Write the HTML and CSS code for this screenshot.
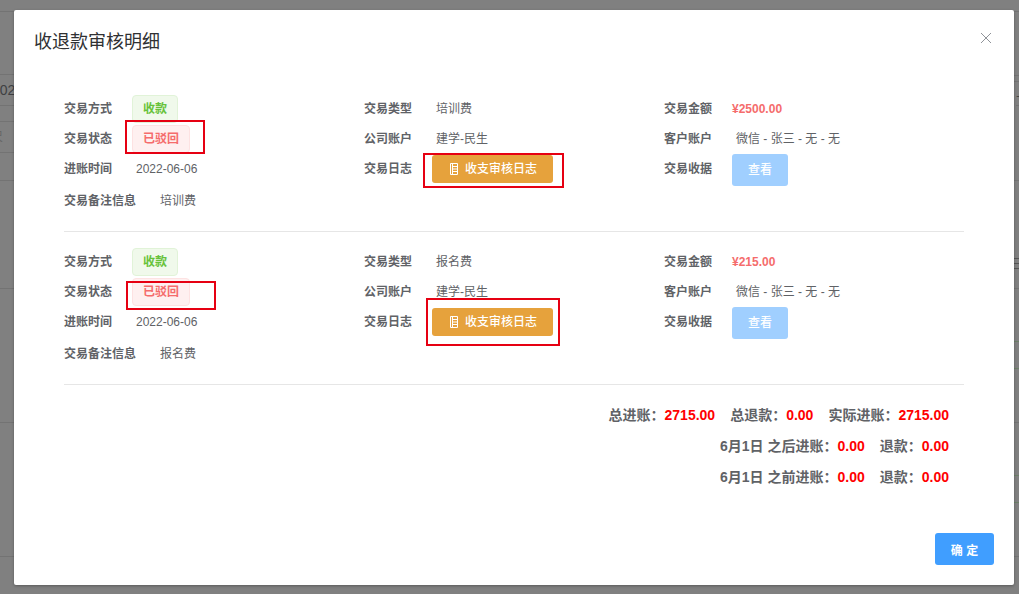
FILE: index.html
```html
<!DOCTYPE html>
<html lang="zh-CN">
<head>
<meta charset="utf-8">
<title>收退款审核明细</title>
<link rel="stylesheet" href="styles.css">
</head>
<body>
<div class="backdrop">
  <div class="strip strip-left">
    <div class="line"></div><div class="line"></div>
    <div class="line cell-date">2022-06-06</div>
    <div class="line"></div>
    <div class="line cell-note">尺</div>
    <div class="line"></div><div class="line"></div><div class="line"></div><div class="line"></div>
  </div>
  <div class="strip strip-right">
    <div class="line"></div><div class="line"></div><div class="line"></div>
    <div class="line cell-plus">+</div>
    <div class="line"></div>
    <div class="line dark"></div><div class="line dark"></div><div class="line dark"></div>
    <div class="line"></div>
    <div class="line green"></div><div class="line green"></div>
    <div class="line"></div>
    <div class="line green"></div><div class="line green"></div>
    <div class="line"></div>
  </div>
</div>

<div class="modal">
  <header class="modal-header">
    <h2 class="modal-title">收退款审核明细</h2>
    <svg class="close" width="12" height="12" viewBox="0 0 12 12"><path d="M1 1l10 10M11 1L1 11" fill="none" stroke="#909399" stroke-width="1"/></svg>
  </header>

  <div class="modal-body">
    <section class="record">
      <div class="grid">
        <div class="field"><span class="label">交易方式</span><span class="tag tag-green">收款</span></div>
        <div class="field"><span class="label">交易类型</span><span class="value">培训费</span></div>
        <div class="field"><span class="label">交易金额</span><span class="amount">¥2500.00</span></div>
        <div class="field"><span class="label">交易状态</span><span class="tag tag-red">已驳回</span></div>
        <div class="field"><span class="label">公司账户</span><span class="value">建学-民生</span></div>
        <div class="field"><span class="label">客户账户</span><span class="value">微信 - 张三 - 无 - 无</span></div>
        <div class="field"><span class="label">进账时间</span><span class="value">2022-06-06</span></div>
        <div class="field"><span class="label">交易日志</span><span class="btn btn-log"><svg class="book" width="10" height="12" viewBox="0 0 10 12"><path d="M1.500.5h7v11h-7zM3.500.5v11M4 3.500h4M4 6h4M4 8.500h4" fill="none" stroke="#fff" stroke-width="1"/></svg>收支审核日志</span></div>
        <div class="field"><span class="label">交易收据</span><span class="btn btn-view">查看</span></div>
      </div>
      <div class="remark"><span class="remark-label">交易备注信息</span><span class="remark-value">培训费</span></div>
    </section>

    <section class="record">
      <div class="grid">
        <div class="field"><span class="label">交易方式</span><span class="tag tag-green">收款</span></div>
        <div class="field"><span class="label">交易类型</span><span class="value">报名费</span></div>
        <div class="field"><span class="label">交易金额</span><span class="amount">¥215.00</span></div>
        <div class="field"><span class="label">交易状态</span><span class="tag tag-red">已驳回</span></div>
        <div class="field"><span class="label">公司账户</span><span class="value">建学-民生</span></div>
        <div class="field"><span class="label">客户账户</span><span class="value">微信 - 张三 - 无 - 无</span></div>
        <div class="field"><span class="label">进账时间</span><span class="value">2022-06-06</span></div>
        <div class="field"><span class="label">交易日志</span><span class="btn btn-log"><svg class="book" width="10" height="12" viewBox="0 0 10 12"><path d="M1.500.5h7v11h-7zM3.500.5v11M4 3.500h4M4 6h4M4 8.500h4" fill="none" stroke="#fff" stroke-width="1"/></svg>收支审核日志</span></div>
        <div class="field"><span class="label">交易收据</span><span class="btn btn-view">查看</span></div>
      </div>
      <div class="remark"><span class="remark-label">交易备注信息</span><span class="remark-value">报名费</span></div>
    </section>

    <div class="totals">
      <p class="total-line"><span class="item">总进账：<b>2715.00</b></span><span class="item">总退款：<b>0.00</b></span><span class="item">实际进账：<b>2715.00</b></span></p>
      <p class="total-line"><span class="item">6月1日 之后进账：<b>0.00</b></span><span class="item">退款：<b>0.00</b></span></p>
      <p class="total-line"><span class="item">6月1日 之前进账：<b>0.00</b></span><span class="item">退款：<b>0.00</b></span></p>
    </div>
  </div>

  <footer class="modal-footer"><span class="btn btn-ok">确 定</span></footer>

  <div class="mark mark-1"></div>
  <div class="mark mark-2"></div>
  <div class="mark mark-3"></div>
  <div class="mark mark-4"></div>
</div>
</body>
</html>
```
FILE: styles.css
```css
* { box-sizing: border-box; }
html, body { margin: 0; height: 100%; }
body {
  position: relative;
  overflow: hidden;
  background: #808080;
  font-family: "Liberation Sans", "Noto Sans CJK SC", sans-serif;
  font-size: 12px;
  color: #606266;
}

/* dimmed page behind the dialog */
.backdrop { display: flex; justify-content: space-between; height: 594px; }
.strip { display: grid; overflow: hidden; }
.strip-left {
  width: 14px;
  grid-template-rows: 12px 63px 31px 16px 31px 28px 108px 134px 134px;
}
.strip-right {
  width: 5px;
  grid-template-rows: 12px 64px 6px 24px 75px 78px 5px 5px 20px 53px 27px 54px 53px 27px 54px;
}
.line { border-bottom: 1px solid #737373; white-space: nowrap; }
.line.dark { border-bottom-color: #555; }
.line.green { border-bottom-color: #6c7f68; }
.cell-date { margin-left: -8px; font-size: 14px; line-height: 30px; color: #3f4043; }
.cell-note { margin-left: -9px; line-height: 30px; color: #666; }
.cell-plus { margin-left: 2px; font-size: 14px; line-height: 28px; color: #444; }

/* dialog */
.modal {
  position: absolute;
  left: 14px;
  top: 10px;
  width: 1000px;
  height: 575px;
  display: flex;
  flex-direction: column;
  background: #fff;
  border-radius: 2px;
  box-shadow: 0 1px 3px rgba(0, 0, 0, .3);
}
.modal-header {
  display: flex;
  justify-content: space-between;
  height: 84px;
  padding: 17px 22px 0 20px;
}
.modal-title {
  margin: 0;
  font-size: 18px;
  font-weight: 400;
  line-height: 28px;
  padding-top: 1px;
  color: #303133;
}
.close { margin-top: 5px; }

.modal-body { flex: 1; padding: 0 50px; }
.record { padding-bottom: 15px; margin-bottom: 15px; border-bottom: 1px solid #e6e6e6; }
.grid {
  display: grid;
  grid-template-columns: repeat(3, 300px);
  grid-template-rows: 30px 30px 32px;
}
.field { display: flex; align-items: flex-start; line-height: 30px; }
.label { width: 68px; flex: none; font-weight: 700; }
.value { margin-left: 4px; }
.amount { font-weight: 700; color: #f56c6c; }

.tag {
  margin-top: 1px;
  height: 28px;
  padding: 0 10px;
  line-height: 26px;
  border: 1px solid;
  border-radius: 4px;
  font-weight: 700;
}
.tag-green { color: #67c23a; background: #f0f9eb; border-color: #e1f3d8; }
.tag-red { color: #f56c6c; background: #fef0f0; border-color: #fde2e2; }

.btn {
  display: inline-flex;
  align-items: center;
  justify-content: center;
  color: #fff;
  border-radius: 3px;
  font-weight: 500;
}
.btn-log { margin-top: 1px; width: 121px; height: 28px; padding-left: 17px; justify-content: flex-start; background: #e6a23c; }
.book { margin-right: 6px; }
.btn-view { width: 56px; height: 32px; background: #a0cfff; }
.btn-ok { width: 59px; height: 32px; background: #409eff; font-weight: 700; }

.remark { display: flex; align-items: flex-start; height: 30px; line-height: 30px; }
.remark-label { width: 96px; flex: none; font-weight: 700; }

.totals { padding-right: 15px; }
.total-line {
  margin: 0;
  display: flex;
  justify-content: flex-end;
  gap: 15px;
  height: 31px;
  font-size: 14px;
  font-weight: 700;
  line-height: 31px;
}
.total-line b { color: #f00; }

.modal-footer { display: flex; justify-content: flex-end; padding: 0 20px 20px; }

/* red review annotations drawn over the dialog */
.mark { position: absolute; border: 2px solid #e60012; }
.mark-1 { left: 111px; top: 110px; width: 80px; height: 34px; }
.mark-2 { left: 409px; top: 143px; width: 141px; height: 35px; }
.mark-3 { left: 112px; top: 271px; width: 90px; height: 29px; }
.mark-4 { left: 412px; top: 288px; width: 134px; height: 48px; }
```
